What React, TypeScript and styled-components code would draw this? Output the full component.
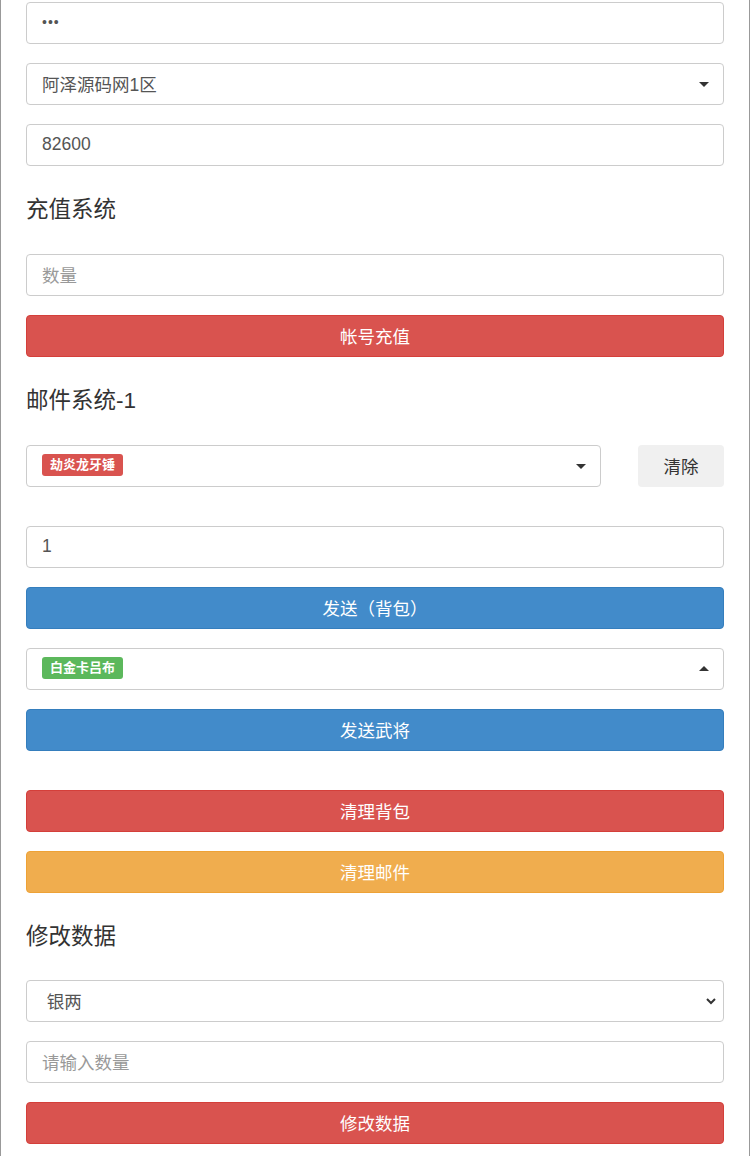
import styled, { createGlobalStyle } from "styled-components";

const GlobalStyle = createGlobalStyle`
  html, body {
    margin: 0;
    padding: 0;
    background: #fff;
  }
  body {
    font-family: "Liberation Sans", "Noto Sans CJK SC", sans-serif;
    color: #333;
  }
`;

const Page = styled.div`
  width: 750px;
  min-height: 100vh;
  box-sizing: border-box;
  border-left: 1px solid #999;
  border-right: 1px solid #999;
  padding: 2px 25px 12px;
  display: flex;
  flex-direction: column;
  gap: 19px;
`;

const Field = styled.div<{ $grow?: boolean }>`
  box-sizing: border-box;
  height: 42px;
  flex: ${(p) => (p.$grow ? "1 1 auto" : "0 0 42px")};
  border: 1px solid #ccc;
  border-radius: 4px;
  background: #fff;
  display: flex;
  align-items: center;
  padding: 0 15px 2px;
  font-size: 17.5px;
  color: #555;
  position: relative;
`;

const Placeholder = styled.span`
  color: #999;
`;

const Dots = styled.span`
  letter-spacing: 1px;
  font-size: 14px;
  color: #555;
`;

const Caret = styled.span<{ $up?: boolean }>`
  position: absolute;
  right: 14px;
  top: 50%;
  width: 0;
  height: 0;
  border-left: 5px solid transparent;
  border-right: 5px solid transparent;
  ${(p) =>
    p.$up
      ? "border-bottom: 5px solid #333; margin-top: -3px;"
      : "border-top: 5px solid #333; margin-top: -2px;"}
`;

const Chevron = styled.svg`
  position: absolute;
  right: 6px;
  top: 50%;
  margin-top: -6px;
`;

const Heading = styled.h3<{ $tight?: boolean }>`
  margin: 12px 0 ${(p) => (p.$tight ? "11px" : "12px")};
  flex: 0 0 auto;
  font-size: 22.5px;
  line-height: 26px;
  font-weight: 400;
  color: #333;
`;

const Button = styled.div<{ $color: string; $border: string }>`
  box-sizing: border-box;
  height: 42px;
  flex: 0 0 42px;
  border-radius: 4px;
  background: ${(p) => p.$color};
  border: 1px solid ${(p) => p.$border};
  color: #fff;
  font-size: 17.5px;
  padding-bottom: 2px;
  display: flex;
  align-items: center;
  justify-content: center;
`;

const Row = styled.div`
  display: flex;
  gap: 37px;
  margin-bottom: 20px;
`;

const ClearButton = styled.div`
  box-sizing: border-box;
  width: 86px;
  height: 42px;
  flex: 0 0 86px;
  border-radius: 4px;
  background: #f0f0f0;
  color: #333;
  font-size: 17.5px;
  padding-bottom: 2px;
  display: flex;
  align-items: center;
  justify-content: center;
`;

const Tag = styled.span<{ $color: string }>`
  background: ${(p) => p.$color};
  color: #fff;
  font-size: 13px;
  font-weight: 700;
  line-height: 22px;
  padding: 0 8px;
  border-radius: 3px;
`;

const Spacer = styled.div`
  flex: 0 0 20px;
  margin-top: -19px;
`;

const red = { $color: "#d9534f", $border: "#d43f3a" };
const blue = { $color: "#428bca", $border: "#357ebd" };
const orange = { $color: "#f0ad4e", $border: "#eea236" };

export default function App() {
  return (
    <>
      <GlobalStyle />
      <Page>
        <Field>
          <Dots>•••</Dots>
        </Field>
        <Field>
          阿泽源码网1区
          <Caret />
        </Field>
        <Field>82600</Field>

        <Heading>充值系统</Heading>
        <Field>
          <Placeholder>数量</Placeholder>
        </Field>
        <Button {...red}>帐号充值</Button>

        <Heading>邮件系统-1</Heading>
        <Row>
          <Field $grow>
            <Tag $color="#d9534f">劫炎龙牙锤</Tag>
            <Caret />
          </Field>
          <ClearButton>清除</ClearButton>
        </Row>
        <Field>1</Field>
        <Button {...blue}>发送（背包）</Button>
        <Field>
          <Tag $color="#5cb85c">白金卡吕布</Tag>
          <Caret $up />
        </Field>
        <Button {...blue}>发送武将</Button>
        <Spacer />
        <Button {...red}>清理背包</Button>
        <Button {...orange}>清理邮件</Button>

        <Heading $tight>修改数据</Heading>
        <Field>
          &nbsp;银两
          <Chevron width="12" height="12" viewBox="0 0 12 12">
            <path d="M2 4 L6 8 L10 4" fill="none" stroke="#333" strokeWidth="2" />
          </Chevron>
        </Field>
        <Field>
          <Placeholder>请输入数量</Placeholder>
        </Field>
        <Button {...red}>修改数据</Button>
      </Page>
    </>
  );
}
